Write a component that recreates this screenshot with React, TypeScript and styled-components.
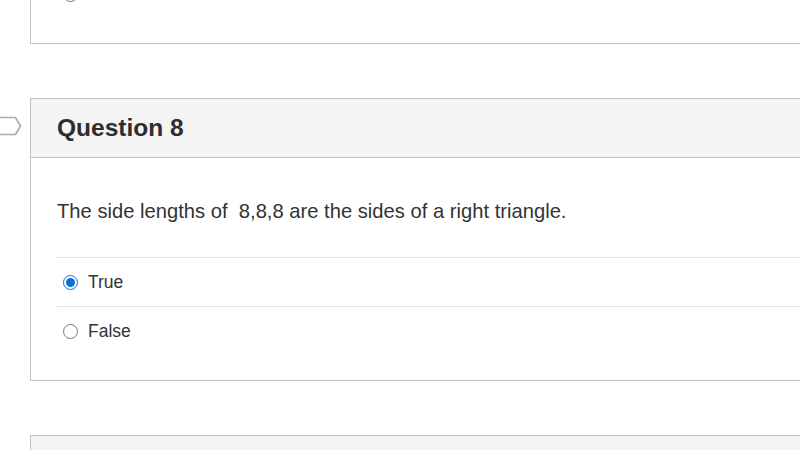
import styled, { createGlobalStyle } from "styled-components";

const GlobalStyle = createGlobalStyle`
    html, body {
        margin: 0;
        padding: 0;
        background: #fff;
        overflow: hidden;
    }
    body {
        font-family: "Liberation Sans", Arial, sans-serif;
        color: #333;
    }
`;

interface Answer {
    id: string;
    label: string;
    checked?: boolean;
}

const answers: Answer[] = [
    { id: "a1", label: "True", checked: true },
    { id: "a2", label: "False" },
];

export default function App() {
    return (
        <Page>
            <GlobalStyle />
            <PrevTail>
                <TailRadio type="radio" name="q7" readOnly />
            </PrevTail>

            <QuestionBox>
                <Header>
                    <Flag width="22" height="20" viewBox="0 0 22 20">
                        <path
                            d="M-4 1.5 H15.5 L20.5 10 L15.5 18.5 H-4"
                            fill="none"
                            stroke="#9fb0bb"
                            strokeWidth="1.6"
                            strokeLinejoin="round"
                        />
                    </Flag>
                    <Title>Question 8</Title>
                </Header>
                <Body>
                    <Prompt>The side lengths of &nbsp;8,8,8 are the sides of a right triangle.</Prompt>
                    <AnswerList>
                        {answers.map((a) => (
                            <AnswerRow key={a.id}>
                                <Radio type="radio" name="q8" defaultChecked={a.checked} />
                                <AnswerLabel>{a.label}</AnswerLabel>
                            </AnswerRow>
                        ))}
                    </AnswerList>
                </Body>
            </QuestionBox>

            <NextBox>
                <NextHeader />
            </NextBox>
        </Page>
    );
}

const Page = styled.div`
    width: 800px;
    height: 450px;
    overflow: hidden;
    display: flex;
    flex-direction: column;

    & > * {
        flex-shrink: 0;
    }
`;

const PrevTail = styled.div`
    margin-left: 30px;
    width: 790px;
    height: 44px;
    border-left: 1px solid #c4c4c4;
    border-bottom: 1px solid #c4c4c4;
    box-sizing: border-box;
    padding-left: 32px;
`;

const TailRadio = styled.input`
    margin: -13px 0 0;
    width: 15px;
    height: 15px;
    vertical-align: top;
`;

const QuestionBox = styled.section`
    margin: 54px 0 0 30px;
    width: 790px;
    border: 1px solid #c4c4c4;
    border-right: none;
    box-sizing: border-box;
`;

const Header = styled.header`
    position: relative;
    height: 58px;
    background: #f4f4f4;
    border-bottom: 1px solid #c4c4c4;
    display: flex;
    align-items: center;
    padding-left: 26px;
`;

const Flag = styled.svg`
    position: absolute;
    left: -31px;
    top: 17px;
`;

const Title = styled.h2`
    margin: 0;
    font-size: 24.5px;
    font-weight: 700;
    color: #2d2d2d;
`;

const Body = styled.div`
    padding: 39px 0 25px 26px;
`;

const Prompt = styled.p`
    margin: 0 0 32px;
    font-size: 20.2px;
    line-height: 28px;
    color: #333;
`;

const AnswerList = styled.div`
    display: flex;
    flex-direction: column;
`;

const AnswerRow = styled.label`
    display: flex;
    align-items: center;
    height: 48px;
    border-top: 1px solid #e2e2e2;
    padding-left: 6px;
`;

const Radio = styled.input`
    margin: 0 10px 0 0;
    width: 15px;
    height: 15px;
    accent-color: #0b6fd8;
`;

const AnswerLabel = styled.span`
    font-size: 17.5px;
    color: #333;
`;

const NextBox = styled.section`
    margin: 54px 0 0 30px;
    width: 790px;
    border: 1px solid #c4c4c4;
    border-right: none;
    box-sizing: border-box;
`;

const NextHeader = styled.div`
    height: 58px;
    background: #f4f4f4;
`;
